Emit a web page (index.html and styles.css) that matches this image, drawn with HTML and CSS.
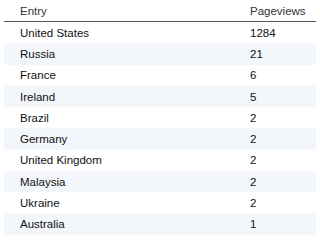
FILE: index.html
```html
<!DOCTYPE html>
<html>
<head>
<meta charset="utf-8">
<link rel="stylesheet" href="styles.css">
</head>
<body>
<table class="stats">
  <thead>
    <tr><th class="c1">Entry</th><th class="c2">Pageviews</th></tr>
  </thead>
  <tbody>
    <tr><td>United States</td><td>1284</td></tr>
    <tr><td>Russia</td><td>21</td></tr>
    <tr><td>France</td><td>6</td></tr>
    <tr><td>Ireland</td><td>5</td></tr>
    <tr><td>Brazil</td><td>2</td></tr>
    <tr><td>Germany</td><td>2</td></tr>
    <tr><td>United Kingdom</td><td>2</td></tr>
    <tr><td>Malaysia</td><td>2</td></tr>
    <tr><td>Ukraine</td><td>2</td></tr>
    <tr><td>Australia</td><td>1</td></tr>
  </tbody>
</table>
</body>
</html>
```

FILE: styles.css
```css
html, body {
  margin: 0;
  padding: 0;
  background: #ffffff;
}
body {
  padding: 0 4px;
  font-family: "Liberation Sans", Arial, sans-serif;
  font-size: 11.5px;
  color: #222;
}
.stats {
  width: 312px;
  border-collapse: collapse;
  table-layout: fixed;
}
.stats th {
  font-weight: normal;
  text-align: left;
  color: #333;
  height: 21px;
  padding: 0 0 0 16px;
  border-bottom: 1px solid #555;
  vertical-align: middle;
}
.stats th.c1 { width: 214px; }
.stats td {
  height: 21.3px;
  padding: 0 0 0 16px;
  vertical-align: middle;
  color: #111;
}
.stats tbody tr:nth-child(even) td {
  background: #f3f6fa;
}
```
